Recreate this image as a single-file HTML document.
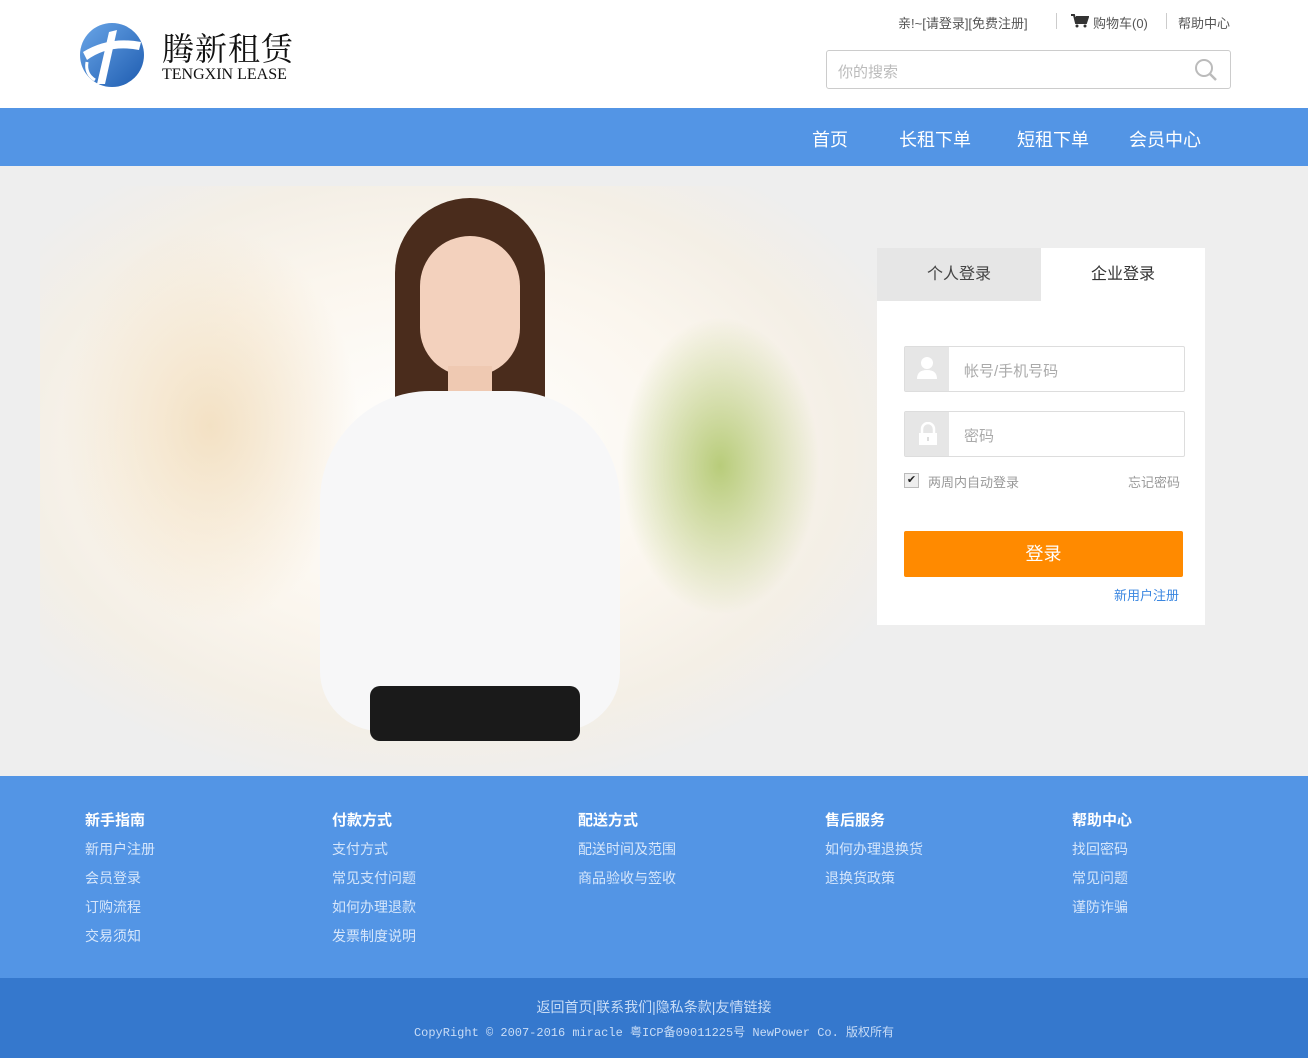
<!DOCTYPE html>
<html><head><meta charset="utf-8"><style>
*{margin:0;padding:0;box-sizing:border-box}
body{width:1308px;height:1058px;overflow:hidden;font-family:"Liberation Sans","Noto Sans CJK SC",sans-serif;background:#fff;position:relative}
.abs{position:absolute}
.top{font-size:13px;color:#555;top:13px}
.nav{top:108px;left:0;width:1308px;height:58px;background:#5395e5}
.nav span{position:absolute;top:18px;color:#fff;font-size:18px}
.hero{top:166px;left:0;width:1308px;height:610px;background:#eeeeee;overflow:hidden}
.foot{top:776px;left:0;width:1308px;height:202px;background:#5395e5}
.col{position:absolute;top:30px;color:#d6e6fb;font-size:14px;line-height:29px}
.col b{color:#fff;font-size:15px;display:block;margin-bottom:0}
.bot{top:978px;left:0;width:1308px;height:80px;background:#3578cd;text-align:center;color:#c8dcf6}
</style></head><body>
<svg class="abs" style="left:79px;top:22px" width="66" height="66" viewBox="0 0 66 66">
<defs><linearGradient id="g" x1="0" y1="0" x2="1" y2="1"><stop offset="0" stop-color="#6aa6e8"/><stop offset="1" stop-color="#1e5cb0"/></linearGradient></defs>
<circle cx="33" cy="33" r="32" fill="url(#g)"/>
<path d="M4 30 Q30 14 62 20 L60 28 Q30 22 8 38Z" fill="#fff"/>
<path d="M30 10 L38 8 L26 62 L18 62Z" fill="#fff"/>
<path d="M8 40 Q6 52 16 58" stroke="#fff" stroke-width="3" fill="none"/>
</svg>
<div class="abs" style="left:162px;top:24px;font-family:'Noto Serif CJK SC',serif;font-size:32px;color:#111;letter-spacing:1px">腾新租赁</div>
<div class="abs" style="left:162px;top:66px;font-family:'Liberation Serif',serif;font-size:16px;color:#111">TENGXIN LEASE</div>
<div class="abs top" style="left:898px">亲!~[请登录][免费注册]</div>
<div class="abs" style="left:1056px;top:13px;width:1px;height:16px;background:#ccc"></div>
<svg class="abs" style="left:1071px;top:14px" width="18" height="14" viewBox="0 0 18 14"><path d="M0 1h3l2 8h10l2-6H5" stroke="#333" stroke-width="2" fill="#333"/><circle cx="6" cy="12" r="1.5" fill="#333"/><circle cx="14" cy="12" r="1.5" fill="#333"/></svg>
<div class="abs top" style="left:1093px">购物车(0)</div>
<div class="abs" style="left:1166px;top:13px;width:1px;height:16px;background:#ccc"></div>
<div class="abs top" style="left:1178px">帮助中心</div>
<div class="abs" style="left:826px;top:50px;width:405px;height:39px;border:1px solid #ccc;border-radius:3px"></div>
<div class="abs" style="left:838px;top:61px;font-size:15px;color:#bbb">你的搜索</div>
<svg class="abs" style="left:1194px;top:58px" width="24" height="24" viewBox="0 0 24 24"><circle cx="10" cy="10" r="8" stroke="#bbb" stroke-width="2" fill="none"/><path d="M16 16l6 6" stroke="#bbb" stroke-width="2.5"/></svg>
<div class="abs nav"><span style="left:812px">首页</span><span style="left:899px">长租下单</span><span style="left:1017px">短租下单</span><span style="left:1129px">会员中心</span></div>
<div class="abs hero">
<div class="abs" style="left:40px;top:20px;width:880px;height:590px;background:radial-gradient(ellipse at 45% 45%,#fff 0,#fbf6ee 40%,#f4efe6 60%,rgba(238,238,238,0) 75%)"></div>
<div class="abs" style="left:60px;top:60px;width:300px;height:400px;background:radial-gradient(ellipse,#f3e1c4 0,rgba(240,225,200,0) 70%)"></div>
<div class="abs" style="left:620px;top:150px;width:200px;height:300px;background:radial-gradient(ellipse,#b8cc7a 0,rgba(200,210,150,0) 70%)"></div>
<div class="abs" style="left:395px;top:32px;width:150px;height:230px;border-radius:75px 75px 30px 30px;background:#4a2c1c"></div>
<div class="abs" style="left:420px;top:70px;width:100px;height:140px;border-radius:50px 50px 48px 48px;background:#f3d1bd"></div>
<div class="abs" style="left:448px;top:200px;width:44px;height:50px;background:#efc9b2"></div>
<div class="abs" style="left:320px;top:225px;width:300px;height:340px;border-radius:110px 110px 60px 60px;background:#f7f7f8"></div>
<div class="abs" style="left:370px;top:520px;width:210px;height:55px;background:#1a1a1a;border-radius:10px"></div>
</div>
<div class="abs" style="left:877px;top:248px;width:328px;height:377px;background:#fff"></div>
<div class="abs" style="left:877px;top:248px;width:164px;height:53px;background:#e6e6e6;text-align:center;line-height:53px;font-size:16px;color:#444">个人登录</div>
<div class="abs" style="left:1041px;top:248px;width:164px;height:53px;text-align:center;line-height:53px;font-size:16px;color:#333">企业登录</div>
<div class="abs" style="left:904px;top:346px;width:281px;height:46px;border:1px solid #ddd;border-radius:2px"></div>
<div class="abs" style="left:905px;top:347px;width:44px;height:44px;background:#e6e6e6"></div>
<svg class="abs" style="left:916px;top:356px" width="22" height="24" viewBox="0 0 22 24"><circle cx="11" cy="7" r="6" fill="#fff"/><path d="M1 23 Q1 14 11 14 Q21 14 21 23Z" fill="#fff"/></svg>
<div class="abs" style="left:964px;top:360px;font-size:15px;color:#aaa">帐号/手机号码</div>
<div class="abs" style="left:904px;top:411px;width:281px;height:46px;border:1px solid #ddd;border-radius:2px"></div>
<div class="abs" style="left:905px;top:412px;width:44px;height:44px;background:#e6e6e6"></div>
<svg class="abs" style="left:918px;top:422px" width="20" height="24" viewBox="0 0 20 24"><path d="M4 11V7a6 6 0 0112 0v4" stroke="#fff" stroke-width="2.5" fill="none"/><rect x="1" y="11" width="18" height="12" fill="#fff"/><rect x="9" y="15" width="2" height="4" fill="#ddd"/></svg>
<div class="abs" style="left:964px;top:425px;font-size:15px;color:#aaa">密码</div>
<div class="abs" style="left:904px;top:473px;width:15px;height:15px;border:1px solid #bbb;background:#eee;font-size:11px;line-height:13px;text-align:center;color:#222">✔</div>
<div class="abs" style="left:928px;top:472px;font-size:13px;color:#999">两周内自动登录</div>
<div class="abs" style="left:1128px;top:472px;font-size:13px;color:#999">忘记密码</div>
<div class="abs" style="left:904px;top:531px;width:279px;height:46px;background:#ff8a00;border-radius:2px;color:#fff;font-size:18px;text-align:center;line-height:46px">登录</div>
<div class="abs" style="left:1114px;top:585px;font-size:13px;color:#3a86e0">新用户注册</div>
<div class="abs foot">
<div class="col" style="left:85px"><b>新手指南</b>新用户注册<br>会员登录<br>订购流程<br>交易须知</div>
<div class="col" style="left:332px"><b>付款方式</b>支付方式<br>常见支付问题<br>如何办理退款<br>发票制度说明</div>
<div class="col" style="left:578px"><b>配送方式</b>配送时间及范围<br>商品验收与签收</div>
<div class="col" style="left:825px"><b>售后服务</b>如何办理退换货<br>退换货政策</div>
<div class="col" style="left:1072px"><b>帮助中心</b>找回密码<br>常见问题<br>谨防诈骗</div>
</div>
<div class="abs bot"><div style="margin-top:19px;font-size:14px">返回首页|联系我们|隐私条款|友情链接</div>
<div style="margin-top:6px;font-size:12px;font-family:'Liberation Mono','Noto Sans CJK SC',monospace">CopyRight © 2007-2016 miracle 粤ICP备09011225号 NewPower Co. 版权所有</div></div>
</body></html>
